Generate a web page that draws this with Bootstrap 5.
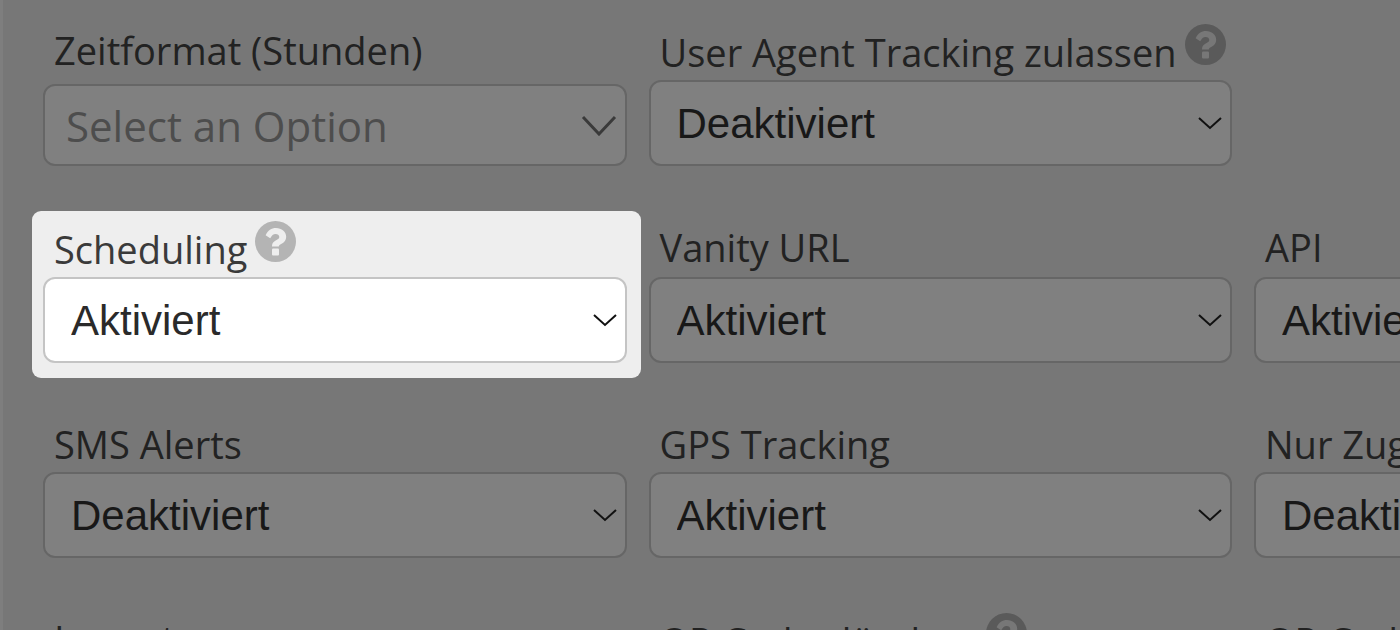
<!DOCTYPE html>
<html lang="de">
<head>
<meta charset="utf-8">
<meta name="viewport" content="width=device-width, initial-scale=1">
<title>Einstellungen</title>
<link href="https://cdn.jsdelivr.net/npm/bootstrap@5.3.0/dist/css/bootstrap.min.css" rel="stylesheet">
<style>
  body { background: #777; color: #222; font-family: "Open Sans", "Noto Sans", sans-serif; overflow: hidden; }
  .settings { border-left: 3px solid #7e7e7e; padding: 14px 0 0 29px; height: 100vh; gap: 30px; }
  .setting { flex: 0 0 43.25vw; padding: 10px 11px 15px; border-radius: 9px; }
  .setting .form-label { font-size: 38px; line-height: 52px; padding: 0 0 2px 11px; gap: 8px; white-space: nowrap; }
  .setting .with-help { padding-top: 2px; }
  .setting .form-select {
    height: 86px; border: 2px solid #666; border-radius: 12px; background-color: #808080; color: #181818;
    font-family: "Liberation Sans", Arial, sans-serif; font-size: 42px; line-height: 50px; padding: 2px 50px 0 26px;
    background-image: url("data:image/svg+xml,%3Csvg xmlns='http://www.w3.org/2000/svg' viewBox='0 0 24 14'%3E%3Cpath d='M1 2l11 10L23 2' fill='none' stroke='%23111' stroke-width='2'/%3E%3C/svg%3E");
    background-size: 24px 14px; background-position: right 8px center;
  }
  .setting .select-search {
    height: 82px; color: #4d4d4d; font-family: "Open Sans", sans-serif; padding: 1px 50px 0 21px;
    background-image: url("data:image/svg+xml,%3Csvg xmlns='http://www.w3.org/2000/svg' viewBox='0 0 36 22'%3E%3Cpath d='M2 3l16 17L34 3' fill='none' stroke='%233a3a3a' stroke-width='3'/%3E%3C/svg%3E");
    background-size: 36px 22px;
  }
  .setting.spotlight { background: #eee; color: #3a3a3a; flex-basis: calc(43.25vw + 3px); padding-right: 14px; margin-right: -3px; }
  .spotlight .form-select { background-color: #fff; border-color: #c4c4c4; color: #2a2a2a; }
  .help { width: 41px; height: 41px; color: #5a5a5a; --hole: #777; }
  .spotlight .help { color: #b4b4b4; --hole: #eee; }
</style>
</head>
<body>
<svg class="d-none">
  <symbol id="help" viewBox="0 0 41 41">
    <circle cx="20.500" cy="20.500" r="20.500" fill="currentColor"/>
    <path d="M10.600 14.200C13 9.500 16.300 7 21 7C26.500 7 31.200 10.800 31.200 15.800C31.200 22.800 23.800 22.600 23.800 25.600H17V25C17 18.900 24.300 19.600 24.300 16C24.300 14.200 22.600 13 20.600 13C18.100 13 16.900 14.500 15.200 17.300Z" fill="var(--hole)"/>
    <rect x="17" y="27.500" width="7" height="7" rx="1" fill="var(--hole)"/>
  </symbol>
</svg>
<main class="settings d-flex flex-column overflow-hidden">
  <div class="d-flex">
    <div class="setting d-flex flex-column justify-content-between">
      <label class="form-label mb-0" for="timeformat">Zeitformat (Stunden)</label>
      <select class="form-select select-search" id="timeformat"><option>Select an Option</option></select>
    </div>
    <div class="setting d-flex flex-column justify-content-between">
      <label class="form-label d-flex mb-0" for="agent"><span class="with-help">User Agent Tracking zulassen</span><svg class="help"><use href="#help"/></svg></label>
      <select class="form-select" id="agent"><option>Deaktiviert</option><option>Aktiviert</option></select>
    </div>
  </div>
  <div class="d-flex">
    <div class="setting spotlight d-flex flex-column justify-content-between">
      <label class="form-label d-flex mb-0" for="scheduling"><span class="with-help">Scheduling</span><svg class="help"><use href="#help"/></svg></label>
      <select class="form-select" id="scheduling"><option>Aktiviert</option><option>Deaktiviert</option></select>
    </div>
    <div class="setting d-flex flex-column justify-content-between">
      <label class="form-label mb-0" for="vanity">Vanity URL</label>
      <select class="form-select" id="vanity"><option>Aktiviert</option><option>Deaktiviert</option></select>
    </div>
    <div class="setting d-flex flex-column justify-content-between">
      <label class="form-label mb-0" for="api">API</label>
      <select class="form-select" id="api"><option>Aktiviert</option><option>Deaktiviert</option></select>
    </div>
  </div>
  <div class="d-flex">
    <div class="setting d-flex flex-column justify-content-between">
      <label class="form-label mb-0" for="sms">SMS Alerts</label>
      <select class="form-select" id="sms"><option>Deaktiviert</option><option>Aktiviert</option></select>
    </div>
    <div class="setting d-flex flex-column justify-content-between">
      <label class="form-label mb-0" for="gps">GPS Tracking</label>
      <select class="form-select" id="gps"><option>Aktiviert</option><option>Deaktiviert</option></select>
    </div>
    <div class="setting d-flex flex-column justify-content-between">
      <label class="form-label mb-0" for="access">Nur Zugriff</label>
      <select class="form-select" id="access"><option>Deaktiviert</option><option>Aktiviert</option></select>
    </div>
  </div>
  <div class="d-flex">
    <div class="setting d-flex flex-column justify-content-between">
      <label class="form-label mb-0" for="import">Import</label>
      <select class="form-select" id="import"><option>Aktiviert</option><option>Deaktiviert</option></select>
    </div>
    <div class="setting d-flex flex-column justify-content-between">
      <label class="form-label d-flex mb-0" for="qrdelete"><span class="with-help">QR Codes löschen</span><svg class="help"><use href="#help"/></svg></label>
      <select class="form-select" id="qrdelete"><option>Aktiviert</option><option>Deaktiviert</option></select>
    </div>
    <div class="setting d-flex flex-column justify-content-between">
      <label class="form-label d-flex mb-0" for="qrcodes"><span class="with-help">QR Codes</span></label>
      <select class="form-select" id="qrcodes"><option>Aktiviert</option><option>Deaktiviert</option></select>
    </div>
  </div>
</main>
<script src="https://cdn.jsdelivr.net/npm/bootstrap@5.3.0/dist/js/bootstrap.bundle.min.js"></script>
</body>
</html>
